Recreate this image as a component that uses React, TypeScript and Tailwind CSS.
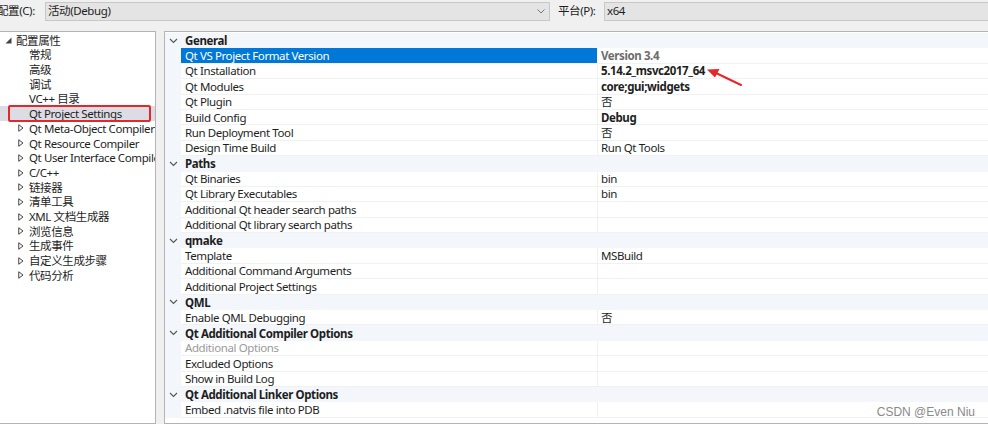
import React from "react";

type Row =
  | { kind: "h"; label: string }
  | { kind: "i"; label: string; value?: string; bold?: boolean; sel?: boolean; dim?: boolean; gray?: boolean };

const rows: Row[] = [
  { kind: "h", label: "General" },
  { kind: "i", label: "Qt VS Project Format Version", value: "Version 3.4", bold: true, sel: true, gray: true },
  { kind: "i", label: "Qt Installation", value: "5.14.2_msvc2017_64", bold: true },
  { kind: "i", label: "Qt Modules", value: "core;gui;widgets", bold: true },
  { kind: "i", label: "Qt Plugin", value: "否" },
  { kind: "i", label: "Build Config", value: "Debug", bold: true },
  { kind: "i", label: "Run Deployment Tool", value: "否" },
  { kind: "i", label: "Design Time Build", value: "Run Qt Tools" },
  { kind: "h", label: "Paths" },
  { kind: "i", label: "Qt Binaries", value: "bin" },
  { kind: "i", label: "Qt Library Executables", value: "bin" },
  { kind: "i", label: "Additional Qt header search paths" },
  { kind: "i", label: "Additional Qt library search paths" },
  { kind: "h", label: "qmake" },
  { kind: "i", label: "Template", value: "MSBuild" },
  { kind: "i", label: "Additional Command Arguments" },
  { kind: "i", label: "Additional Project Settings" },
  { kind: "h", label: "QML" },
  { kind: "i", label: "Enable QML Debugging", value: "否" },
  { kind: "h", label: "Qt Additional Compiler Options" },
  { kind: "i", label: "Additional Options", dim: true },
  { kind: "i", label: "Excluded Options" },
  { kind: "i", label: "Show in Build Log" },
  { kind: "h", label: "Qt Additional Linker Options" },
  { kind: "i", label: "Embed .natvis file into PDB" },
];

const tree: { label: string; level: 0 | 1 | 2; sel?: boolean }[] = [
  { label: "配置属性", level: 0 },
  { label: "常规", level: 1 },
  { label: "高级", level: 1 },
  { label: "调试", level: 1 },
  { label: "VC++ 目录", level: 1 },
  { label: "Qt Project Settings", level: 1, sel: true },
  { label: "Qt Meta-Object Compiler", level: 2 },
  { label: "Qt Resource Compiler", level: 2 },
  { label: "Qt User Interface Compiler", level: 2 },
  { label: "C/C++", level: 2 },
  { label: "链接器", level: 2 },
  { label: "清单工具", level: 2 },
  { label: "XML 文档生成器", level: 2 },
  { label: "浏览信息", level: 2 },
  { label: "生成事件", level: 2 },
  { label: "自定义生成步骤", level: 2 },
  { label: "代码分析", level: 2 },
];

const font = { fontFamily: '"Noto Sans", "Noto Sans CJK SC", sans-serif' };

function Chevron() {
  return (
    <svg width="9" height="6" viewBox="0 0 9 6" className="shrink-0">
      <path d="M1 1 L4.5 4.5 L8 1" fill="none" stroke="#555" strokeWidth="1.1" />
    </svg>
  );
}

function OpenTri() {
  return (
    <svg width="6" height="8" viewBox="0 0 6 8" className="shrink-0">
      <path d="M0.75 0.75 L5 4 L0.75 7.25 Z" fill="none" stroke="#444" strokeWidth="1" />
    </svg>
  );
}

function FilledTri() {
  return (
    <svg width="7" height="7" viewBox="0 0 7 7" className="shrink-0">
      <path d="M6.5 0.5 L6.5 6.5 L0.5 6.5 Z" fill="#444" />
    </svg>
  );
}

export default function App() {
  return (
    <div
      className="relative w-[988px] h-[424px] overflow-hidden bg-[#f0f0f0] text-[11.5px] tracking-[-0.4px] text-[#1e1e1e]"
      style={font}
    >
      {/* top bar */}
      <div className="flex items-center h-[31px] pb-[9px]">
        <span className="ml-[-3px] w-[48px] shrink-0 whitespace-nowrap">配置(C):</span>
        <div className="flex items-center w-[505px] h-[19px] bg-[#e4e4e4] border border-[#c8c8c8] pl-[2px] pr-[4px]">
          <span className="flex-1">活动(Debug)</span>
          <svg width="8" height="5" viewBox="0 0 8 5">
            <path d="M0.5 0.5 L4 4 L7.5 0.5" fill="none" stroke="#777" strokeWidth="1" />
          </svg>
        </div>
        <span className="ml-[8px] w-[46px] shrink-0 whitespace-nowrap">平台(P):</span>
        <div className="flex items-center flex-1 h-[19px] bg-[#e4e4e4] border border-[#c8c8c8] border-r-0 pl-[2px]">
          x64
        </div>
      </div>

      <div className="flex h-[393px]">
        {/* left tree */}
        <div className="w-[156px] shrink-0 overflow-hidden bg-white border border-[#b4b4b4] border-l-0 pt-[1px]">
          {tree.map((t, i) => (
            <div
              key={i}
              className={
                "relative flex items-center h-[14.7px] " +
                (t.sel ? "bg-[#dcdce4]" : "")
              }
            >
              {t.level === 0 && (
                <div className="flex items-center pl-[5px] gap-[4px]">
                  <FilledTri />
                  <span>{t.label}</span>
                </div>
              )}
              {t.level === 1 && <span className="pl-[29px] whitespace-nowrap">{t.label}</span>}
              {t.level === 2 && (
                <div className="flex items-center pl-[18px] gap-[5px] whitespace-nowrap">
                  <OpenTri />
                  <span>{t.label}</span>
                </div>
              )}
              {t.sel && (
                <div className="absolute left-[8px] right-[4px] top-[-1px] bottom-[-1px] border-2 border-[#e8262a] rounded-[2px]" />
              )}
            </div>
          ))}
        </div>

        <div className="w-[8px] shrink-0" />

        {/* property grid */}
        <div className="flex-1 bg-white border border-[#b4b4b4] border-r-0 pt-[1px]">
          {rows.map((r, i) =>
            r.kind === "h" ? (
              <div key={i} className="flex items-center h-[15.4px] bg-[#f3f6fa]">
                <div className="w-[16px] flex justify-center pl-[1px]">
                  <Chevron />
                </div>
                <span className="pl-[4px] font-bold">{r.label}</span>
              </div>
            ) : (
              <div key={i} className="flex h-[15.4px]">
                <div className="w-[16px] shrink-0 bg-[#f3f6fa]" />
                <div
                  className={
                    "w-[416px] shrink-0 flex items-center pl-[4px] border-b border-[#f1f1f1] " +
                    (r.sel ? "bg-[#0078d7] text-white border-[#0078d7]" : r.dim ? "text-[#9a9a9a]" : "")
                  }
                >
                  {r.label}
                </div>
                <div
                  className={
                    "flex-1 flex items-center pl-[3px] border-l border-b border-[#f1f1f1] " +
                    (r.bold ? "font-bold " : "") +
                    (r.gray ? "text-[#6d6d6d]" : "")
                  }
                >
                  {r.value ?? ""}
                </div>
              </div>
            )
          )}
        </div>
      </div>

      {/* red arrow annotation */}
      <svg className="absolute left-[704px] top-[62px]" width="44" height="28" viewBox="0 0 44 28">
        <path d="M37 23 L12 11" stroke="#e8262a" strokeWidth="2" strokeLinecap="round" />
        <path d="M3 7.5 L15.5 7 L11 15.5 Z" fill="#e8262a" />
      </svg>

      {/* watermark */}
      <div className="absolute right-[13px] top-[403px] text-[12px] tracking-normal text-[#8a8a8a]" style={{ fontFamily: '"Liberation Sans", sans-serif' }}>
        CSDN @Even Niu
      </div>
    </div>
  );
}
